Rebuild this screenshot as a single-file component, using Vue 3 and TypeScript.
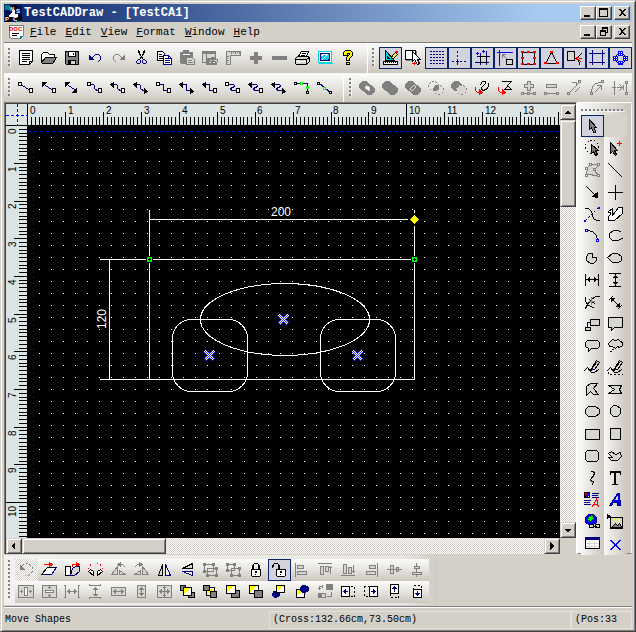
<script setup lang="ts">
import { computed, onMounted, onUnmounted, ref } from 'vue'

interface Layer { stroke: string; fill: string; dash: boolean; d: string }
interface Tool { label: string; layers: Layer[]; state: '' | 'on' | 'dim' }

const palette: Record<string, string> = {
  '-': 'none', K: '#000', N: '#000080', B: '#0000ff', G: '#808080', R: '#ff0000',
  W: '#fff', L: '#d8d6d0', C: '#00d8e0', Y: '#ffff00', E: '#00ff00', F: '#008000',
}

// Each layer is "<stroke><fill>[d for dashed] <path>", layers are joined by "|".
function parse(source: string): Layer[] {
  return source.split('|').map((part) => {
    const cut = part.indexOf(' ')
    return { stroke: palette[part[0]], fill: palette[part[1]], dash: part[2] === 'd', d: part.slice(cut + 1) }
  })
}
function tools(rows: [string, string, ('on' | 'dim')?][]): Tool[] {
  return rows.map(([label, src, state]) => ({ label, layers: parse(src), state: state ?? '' }))
}

let gridDots = ''
for (let y = 1; y < 15; y += 3) for (let x = 2; x < 16; x += 3) gridDots += `M${x} ${y}h1`

const standard = tools([
  ['New', 'KW M1 0H14V11L11 14H1Z|K- M4 3H11M4 5H11M4 7H11M4 9H11M4 11H8M11 14V11H14'],
  ['Open', 'KW M0 12V4L2 2H6L8 4H13V7|KG M0 12L4 7H15L12 12L11 13H1Z'],
  ['Save', 'KG M1 1H14V14H2L1 13Z|KW M4 1H11V6H4Z|K- M9 3V4|KL M4 10H11V14H4Z|KK M5 11H6V13H5Z'],
  ['Undo', 'NN M2 5V9H6Z|N- M5 7L8 4H11L13 6V9L11 11'],
  ['Redo', 'GG M14 5V9H10Z|G- M11 7L8 4H5L3 6V9L5 11', 'dim'],
  ['Cut', 'K- M5 0V2L10 9M11 0V2L6 9M6 1V3M10 1V3|N- M5 9H6L7 10V12L6 13H4L3 12V11ZM10 9H11L13 11V12L12 13H10L9 12V10Z'],
  ['Copy', 'KW M1 1H6L8 3V10H1Z|K- M3 4H5M3 6H6M3 8H6|NW M7 5H12L15 8V14H7Z|N- M9 8H11M9 10H13M9 12H13M12 5V8H15'],
  ['Paste', 'GG M1 2H13V13H2L1 12Z|GG M4 0H9V3H4Z|W- M4 4H10|GL M7 7H13L15 9V14H7Z|G- M9 10H12M9 12H13', 'dim'],
  ['Symbol library', 'GL M0 1H13V12H0Z|GG M0 1H13V3H0Z|G- M4 4V12|GG M5 8H8L9 7H13V14H4Z|L-d M7 10H13M6 12H12|G- M13 9H15L14 14', 'dim'],
  ['Ruler', 'GL M1 1H15V5H5V14H1Z|G- M6 1V3M8 1V2M10 1V3M12 1V2M14 1V3M1 6H3M1 8H2M1 10H3M1 12H2', 'dim'],
  ['Zoom in', 'GG M6 2H9V13H6Z|GG M2 6H13V9H2Z', 'dim'],
  ['Zoom out', 'GG M1 6H15V9H1Z', 'dim'],
  ['Print', 'KW M4 6L7 1H14L12 6Z|K- M8 3H11M7 5H10|KL M1 8L3 6H14L15 8V11L12 14H2L1 13Z|K- M1 9H12L15 7M12 9V13|W- M3 11H10'],
  ['Display', 'CW M1 1H14V12H1Z|NC M3 3H12V10H3Z|W- M4 5L6 4H9M5 9L10 4|B- M10 10L12 8|C- M2 13H15'],
  ['Help', 'KY M3 2L5 0H10L12 2V5L9 8V10H6V7L9 4V3H7V5H3Z|KY M6 12H9V14H6Z'],
])

const snapping = tools([
  ['Design mode', 'KC M3 0V10H12Z|KL M5 6V8H7Z|KW M1 11H15V14H1Z|K- M3 12V12M5 12V12M7 12V12M9 12V12M11 12V12M13 12V12|KY M9 8L10 5L13 2L15 4L11 8Z|R- M13 1H15M14 2H15', 'on'],
  ['Page select', 'KW M0 0H10V9H0Z|G- M11 1V9M1 10H7|KW M7 1V11L9 9L12 14L14 13L12 9H15Z|R- M7 13H11M9 12V14'],
  ['Show grid', 'N- ' + gridDots, 'on'],
  ['Show guides', 'B-d M6 0V15|N-d M0 11H16|N- M5 11H7M6 10V12', 'on'],
  ['Snap to grid', 'N- M6 3V14M12 1V14M3 6H15M1 12H14|K- M6 6H12V12H6Z|B- M2 3H4M3 2V4M8 1H10M9 0V2', 'on'],
  ['Snap to corner', 'B- M0 2H15M2 0V15|KL M9 9H15V14H9Z|G- M5 4L9 8M5 4V7M5 4H8', 'on'],
  ['Bounds', 'K- M2 2H14V14H2Z|RR M1 1H3V2H1ZM7 1H9V2H7ZM13 1H15V2H13ZM1 7H3V8H1ZM13 7H15V8H13ZM1 13H3V14H1ZM7 13H9V14H7ZM13 13H15V14H13Z', 'on'],
  ['Vertices', 'K- M8 2L14 13H2Z|RR M7 1H9V2H7ZM1 12H3V13H1ZM13 12H15V13H13Z', 'on'],
  ['Glue', 'KL M1 1H8V10H1Z|K- M11 7L15 3M11 9L13 12V14M11 8H9|RR M10 7H12L10 9Z|R- M12 9L14 11M13 8H15', 'on'],
  ['Margins', 'N- M3 0V14M13 0V14M0 3H15M0 12H15', 'on'],
  ['Connection points', 'BW M6 1H10V5H6ZM6 11H10V14H6ZM1 6H5V10H1ZM11 6H15V10H11Z|B- M8 1V5M8 11V14M6 3H10M1 8H5M11 8H15M3 6V10M13 6V10M6 13H10|K- M5 4H5M11 4H11M5 12H5M11 12H11M4 5H4M12 5H12M4 11H4M12 11H12', 'on'],
])

const boxA = 'KW M0 2H3V5H0Z|'
const boxB = 'KW M11 8H14V12H11Z'
const arrowA = 'KK M0 4L3 2V7Z|'
const arrowB = 'KK M14 11L11 8V13Z'
const wave = 'N- M4 4H6L7 5V8L8 9L10 10|'
const step = 'N- M4 4H7V10H10|'
const snake = 'N- M4 4H8L9 5L8 7H6L5 9L7 10H10|'
const connectors = tools([
  ['Line connector', 'N- M4 5L10 9|' + boxA + boxB],
  ['Line, start arrow', 'N- M4 5L10 9|KK M1 2H5L1 6Z|' + boxB],
  ['Line, two arrows', 'N- M4 5L10 9|KK M1 2H5L1 6Z|KK M12 12H8L12 8Z'],
  ['Curve connector', wave + boxA + boxB],
  ['Curve, start arrow', wave + arrowA + boxB],
  ['Curve, two arrows', wave + arrowA + arrowB],
  ['Step connector', step + boxA + boxB],
  ['Step, two arrows', step + arrowA + arrowB],
  ['Step, start arrow', step + arrowA + boxB],
  ['Snake connector', snake + boxA + boxB],
  ['Snake, start arrow', snake + arrowA + boxB],
  ['Snake, two arrows', snake + arrowA + arrowB],
  ['Corner link', 'N- M2 3H13V12|KW M0 2H2V4H0ZM12 11H14V13H12Z|EW M6 2H8V4H6ZM12 6H14V8H12Z'],
  ['Diagonal link', 'N- M2 3L13 12|KW M0 2H2V4H0ZM12 11H14V13H12Z|EW M6 7H8V9H6Z'],
])

const lobeA = 'M3 1H7L10 4V7L7 10H3L0 7V4Z'
const lobeB = 'M8 5H12L15 8V11L12 14H8L5 11V8Z'
const booleans = tools([
  ['Combine', `GG ${lobeA}|GG ${lobeB}|LW M7 5L10 7V10L7 9L6 7Z`, 'dim'],
  ['Union', `GG ${lobeA}|GG ${lobeB}`, 'dim'],
  ['Intersect', `GG ${lobeA}|GG ${lobeB}|L- M5 9V8L8 5H9M6 10L7 10L10 7V6|GG M7 7L8 7V8L7 8Z`, 'dim'],
  ['Common', `G-d ${lobeA}|G-d ${lobeB}|GG M7 5L10 5V9L7 10L5 8Z`, 'dim'],
  ['Subtract', `GG ${lobeA}|LL ${lobeB}|G-d ${lobeB}`, 'dim'],
  ['To curve', 'K- M6 4L8 1H11V3L7 7V9L9 10L13 8L14 5V3|R- M1 7V10L3 12H6|RR M5 9V14L8 12Z'],
  ['To polyline', 'K- M5 1H14L10 5L14 9H7L10 6|R- M1 7V10L3 12H6|RR M5 9V14L8 12Z'],
  ['Add node', 'GL M7 1H10V4H13V7H10V10H7V7H4V4H7Z|G- M1 12H3V14H1ZM7 12H9V14H7ZM13 12H15V14H13ZM4 13H6M10 13H12', 'dim'],
  ['Remove node', 'GL M3 4H13V7H3Z|G- M1 12H3V14H1ZM13 12H15V14H13ZM4 13H12', 'dim'],
  ['Straighten', 'G- M3 12L13 2M1 12H3V14H1ZM12 0H14V2H12ZM6 2H9M10 2V5M9 11L13 7', 'dim'],
  ['Bend', 'G- M2 11L3 6L6 3L12 2M1 12H3V14H1ZM12 0H14V2H12ZM6 11L11 6M8 5H12V9', 'dim'],
  ['Break', 'G- M2 1V14M0 7H3M14 3V12M13 1H15V3H13ZM13 12H15V14H13Z|G- M5 7H10M7 4L10 7L7 10M11 5V9', 'dim'],
])

const pencil = 'KL M7 8L12 0L15 2L10 9Z|K- M7 8L6 10L9 9M8 7L13 1|B- M8 9H8'
const drawing: (Tool | null)[] = tools([
  ['Select', 'KG M5 1V11L7 9L9 14H11L10 9H12Z', 'on'],
  ['None', '-- M0 0'],
  ['Lasso', 'K-d M5 0H10L14 4V9L10 13H5L1 9V4Z|KG M7 4V13L9 11L11 15L13 14L11 10H14Z'],
  ['Add to selection', 'KG M3 2V13L5 11L8 15L9 14L7 10H10Z|R- M10 3H14M12 1V5'],
  ['Edit points', 'GL M2 12L3 5L6 2L14 2L10 8L14 13Z|GW M1 5H3V7H1ZM5 1H7V3H5ZM13 1H15V3H13ZM9 6H11V8H9ZM1 12H3V14H1ZM13 12H15V14H13Z', 'dim'],
  ['Line', 'K- M1 1L14 14'],
  ['Arrow', 'K- M2 2L12 12|KK M13 13V8L8 12Z'],
  ['Cross', 'K- M8 1V15M1 8H15'],
  ['Spline', 'K- M1 2H4L7 5L9 12L12 14H15|K-d M1 14L14 1|BB M0 14H1V15H0ZM14 1H15V2H14Z'],
  ['Polyline', 'KW M1 5L5 2V9L11 1H15V7L7 14H1V10L3 8V6H1Z'],
  ['Arc', 'K- M3 2L8 3L12 7L13 12|BW M1 1H3V3H1ZM12 11H14V13H12Z'],
  ['Open ellipse', 'K- M13 3L10 2H6L2 5V9L5 12H10L15 10'],
  ['Pie', 'KL M4 3H8L8 7H12V10L9 13H6L2 10V6Z'],
  ['Closed curve', 'KL M0 7L5 3H10L14 6V10L11 12H5Z'],
  ['Horizontal dimension', 'K- M1 2V13M14 2V13M2 7H13|KK M3 7L5 5V9ZM12 7L10 5V9Z'],
  ['Vertical dimension', 'K- M2 1H13M2 14H13M8 2V13|KK M8 3L6 5H10ZM8 12L6 10H10Z'],
  ['Angle dimension', 'K- M15 2H11L7 5L3 10L1 14M1 3V7L4 11L9 13M5 5L10 9|G- M7 3V10M5 7H10'],
  ['Diagonal dimension', 'K- M2 5L5 2M11 14L14 11M4 4L12 12|KK M4 4H7L4 7ZM12 12H9L12 9Z'],
  ['Boxed callout', 'KL M6 3H15V9H6Z|KL M1 11H6V14H1Z|K- M6 6H3V10'],
  ['Box speech', 'KL M1 1H15V11H7L4 14V11H1Z'],
  ['Round speech', 'KL M3 2H13L15 4V8L13 10H7L4 13V10L1 8V4Z'],
  ['Cloud speech', 'KL M3 3L5 1L8 2L11 1L13 3L15 4V7L12 9L10 8L8 10L5 8H2L1 5Z|K- M5 11H6M3 13H4'],
  ['Freehand', 'K- M0 10L3 7L7 12H10L14 9|' + pencil],
  ['Filled freehand', 'K- M0 10L3 7L7 12H10L14 9|' + pencil + '|K-d M1 11V14H15V11'],
  ['Polygon', 'KL M2 13V4L6 1H13L9 6L14 12H9L6 9Z'],
  ['Filled polygon', 'KL M1 3H14L12 7L14 11H1L7 7Z'],
  ['Ellipse', 'KL M4 2H11L15 5V9L11 12H4L1 9V5Z'],
  ['Circle', 'KL M6 1H9L13 4V9L10 12H6L3 9V4Z'],
  ['Rectangle', 'KL M1 3H15V13H1Z'],
  ['Square', 'KL M3 2H13V13H3Z'],
  ['Rounded rectangle', 'KL M3 2H12L14 4V11L12 13H3L1 11V4Z'],
  ['Blob', 'KL M1 5L4 3L8 6L13 4L14 8L10 12H4L1 9H5L3 7Z'],
  ['Curve', 'K- M7 1H9L10 3L6 9L7 11H9L8 14M10 4L7 8'],
  ['Text', 'K- M3 1H13V4M3 1V4M4 2H12M8 2V14M7 2V14M5 14H10'],
  ['Rich text', 'KB M0 0H5V5H0Z|RR M1 1H2V2H1Z|YY M3 4H4V4H3Z|N- M8 1H14M8 3H13M8 5H14M0 8H6M0 10H5M0 12H6|R- M8 14L12 7L14 14M9 12H13M13 8V13'],
  ['Word art', 'NB M2 13L10 1H12L13 13H10L10 10H6L4 13Z|LL M8 7L10 4V7Z'],
  ['Web link', 'NB M4 0H9L12 3V8L9 10H4L1 8V3Z|FE M5 2L8 1L9 4L6 7L3 5Z|KL M5 10H9V13H5ZM11 10H15V13H11Z|K- M9 12H12'],
  ['Picture', 'KL M3 3H15V14H3Z|Y-d M5 5H13M5 7H13|KG M4 13L8 9L10 11L12 9L14 12V13Z|KK M0 0L3 2L0 4Z'],
  ['Table', 'KW M1 1H15V12H1Z|NN M1 1H15V3H1Z|L- M5 5V11M10 5V11M2 7H14M2 10H14'],
  ['Delete', 'B- M3 4L12 13M4 4L13 13M12 4L3 13M13 4L4 13'],
])
drawing[1] = null

const arrange = tools([
  ['Free rotate', 'G-d M4 3L7 1H10L14 5V9L10 13H6|GG M2 3V7H6Z', 'dim'],
  ['Skew', 'R- M3 2H9|RR M8 0V4L11 2Z|KW M0 12L6 5H15L10 12Z|N- M15 5L10 12H2'],
  ['Shear', 'R- M8 4V2H12|RR M12 0V4L15 2Z|KW M1 4H6V13H1Z|NL M6 13L8 6L11 4H15V9L10 13Z'],
  ['Rotate halves', 'Y- M8 0V14|R-d M1 7L3 2L6 1M15 7L13 2L10 1|KW M1 9L6 13V9L3 7ZM15 9L10 13V9L13 7Z'],
  ['Rotate left', 'GL M7 12V4L1 12ZM9 12H15L9 8Z|G- M8 2H12L14 4|GG M7 2L10 0V4Z', 'dim'],
  ['Rotate right', 'GL M9 12V4L15 12ZM7 12H1L7 8Z|G- M8 2H4L2 4|GG M9 2L6 0V4Z', 'dim'],
  ['Flip horizontal', 'KL M6 2V13H2Z|NW M9 2V13H14Z'],
  ['Flip vertical', 'KL M13 1V6H3Z|NW M13 13V9H3Z'],
  ['Group', 'G- M2 2H11V9H2ZM5 6H14V13H5ZM1 1H3V3H1ZM10 1H12V3H10ZM1 8H3V10H1ZM13 5H15V7H13ZM13 12H15V14H13ZM4 12H6V14H4Z', 'dim'],
  ['Ungroup', 'G- M2 2H9V8H2ZM6 6H14V13H6ZM1 1H3V3H1ZM8 1H10V3H8ZM1 7H3V9H1ZM13 5H15V7H13ZM13 12H15V14H13ZM5 12H7V14H5Z', 'dim'],
  ['Lock', 'K- M4 6V3L6 1H9L11 3V6M5 3V6M10 3V6|KW M3 7H12V13L11 14H4L3 13Z|K- M7 9H8M7 10H8M7 12V12'],
  ['Unlock', 'K- M1 5V3L3 1H6L8 3V6M2 3V4M7 3V6|KW M5 7H14V13L13 14H6L5 13Z|K- M9 9H10M9 10H10M9 12V12', 'on'],
  ['Align left', 'G- M1 1V14|GL M3 3H9V6H3ZM3 9H12V12H3Z', 'dim'],
  ['Align top', 'G- M1 1H14M13 4V11M12 5H14|GL M3 4H6V12H3ZM8 4H11V9H8Z', 'dim'],
  ['Align bottom', 'G- M1 13H14M13 3V10M12 9H14|GL M3 2H6V11H3ZM8 5H11V11H8Z', 'dim'],
  ['Align right', 'G- M14 1V14|GL M6 3H12V6H6ZM3 9H12V12H3Z', 'dim'],
  ['Align middle', 'G- M1 7H15|GL M4 3H7V11H4ZM10 5H12V9H10Z|G- M4 7H7M10 7H12', 'dim'],
  ['Align center', 'G- M7 1V14|GL M5 4H10V6H5ZM3 10H12V12H3Z', 'dim'],
  ['Center horizontally', 'GL M0 1H15V13H0Z|GW M6 3H9V11H6Z|G- M2 7H4M11 7H13M3 6V8M12 6V8', 'dim'],
  ['Center vertically', 'GL M1 1H15V13H1Z|GW M4 6H12V8H4Z|G- M8 2V4M8 10V12M7 3H9M7 11H9', 'dim'],
  ['Space across', 'G- M0 1H1V13H0M15 1H14V13H15M3 7H12M5 5V9M4 6V8M10 5V9M11 6V8', 'dim'],
  ['Space down', 'G- M2 0V1H13V0M2 14V13H13V14M8 3V11M6 5H10M7 4H9M6 10H10M7 11H9', 'dim'],
  ['Same width', 'GL M1 3H15V11H1Z|G- M3 7H13M4 6V8M5 5V9M12 6V8M11 5V9', 'dim'],
  ['Same height', 'GL M4 1H12V13H4Z|G- M8 3V11M7 4H9M6 5H10M7 10H9M6 9H10', 'dim'],
  ['Same size', 'GL M1 1H15V13H1Z|G- M3 7H13M8 2V12M4 6V8M12 6V8M7 3H9M7 11H9M5 5V9M11 5V9', 'dim'],
  ['Bring to front', 'KG M1 1H6V6H1ZM9 8H15V13H9Z|KW M4 3H12V11H4Z|YY M5 4H10L5 9Z'],
  ['Send to back', 'KW M4 3H12V11H4Z|YY M5 5H10L5 9Z|KG M1 1H7V6H1ZM8 7H14V13H8Z'],
  ['Bring forward', 'KG M6 6H14V13H6Z|KW M1 1H10V9H1Z|YY M2 2H7L2 7Z'],
  ['Send backward', 'KW M1 1H10V9H1Z|YY M2 2H7L2 7Z|KG M6 6H14V13H6Z'],
  ['In front of', 'NN M2 7H5L8 9V11L5 13H3L1 11Z|KW M5 1H13V8H5Z|YY M6 2H10L6 6Z'],
  ['Behind', 'KW M2 5H10V13H2Z|YY M3 6H8L3 10Z|NN M8 1H11L14 3V6L11 8H8L6 6V3Z'],
  ['Swap order', 'GG M9 0H15V5H9Z|GL M1 9H8V13H1Z|GG M1 9H4V13H1Z|G- M2 5V2H5M14 8V12H10M1 4H3M5 1V3', 'dim'],
  ['Nudge left', 'K-d M10 2H14V12H10|KW M1 2H9V12H1Z|N- M3 7H7M4 6V8M5 5V9'],
  ['Nudge right', 'K-d M6 2H1V12H6|KW M6 2H14V12H6Z|N- M8 7H12M11 6V8M10 5V9'],
  ['Nudge up', 'K-d M4 9V13H12V9|KW M4 0H12V9H4Z|N- M8 2V7M7 3H9M6 4H10'],
  ['Nudge down', 'K-d M4 5V1H12V5|KW M4 5H12V13H4Z|N- M8 7V11M7 10H9M6 9H10'],
])

const bottomRows = [arrange.slice(0, 18), arrange.slice(18)]
const drawColumns = [drawing.filter((_, i) => i % 2 === 0), drawing.filter((_, i) => i % 2 === 1)]
const menus = ['File', 'Edit', 'View', 'Format', 'Window', 'Help']

const STEP_X = 37.9
const STEP_Y = 37.7
const rulerX = ref<SVGSVGElement | null>(null)
const rulerY = ref<SVGSVGElement | null>(null)
const spanX = ref(0)
const spanY = ref(0)
function measure() {
  spanX.value = rulerX.value?.clientWidth ?? 0
  spanY.value = rulerY.value?.clientHeight ?? 0
}
onMounted(() => {
  measure()
  window.addEventListener('resize', measure)
})
onUnmounted(() => window.removeEventListener('resize', measure))

const range = (span: number, stepSize: number) =>
  Array.from({ length: Math.max(0, Math.floor((span - 16) / stepSize) + 1) }, (_, i) => i)
const numbersX = computed(() => range(spanX.value, STEP_X))
const numbersY = computed(() => range(spanY.value, STEP_Y))

let ticksX = ''
let ticksY = ''
for (let i = 1; i < 600; i++) {
  const near = i % 100 === 0 ? 0 : i % 10 === 0 ? 8 : 13
  const p = Math.floor((i * STEP_X) / 10 - 0.2)
  const q = Math.floor((i * STEP_Y) / 10 - 0.4)
  ticksX += `M${p} ${near}h1V21h-1Z`
  ticksY += `M${near} ${q}V${q + 1}H21V${q}Z`
}

let dots = ''
for (let y = 0; y < 90; y++) {
  for (let x = 0; x < 160; x++) dots += `M${Math.round(11 + x * 12.03)} ${11 + y * 12}h1v1h-1z`
}
const handles = [[121, 133], [386, 133]]
const centers = [[255, 193], [181, 229], [329, 229]]
</script>

<template>
  <div class="window">
    <header class="title">
      <svg class="logo" viewBox="0 0 17 17">
        <rect width="17" height="17" fill="#001060" />
        <path d="M0 0H5V5H0ZM11 10H17V17H11Z" fill="#008088" />
        <path d="M6 0H12V6H6ZM0 11H6V17H0ZM11 10H17V16H11Z" fill="#000" />
        <path d="M7 5H10V9H13V12H4V10L7 8Z" fill="#fff" />
        <text x="5" y="6">N</text><text x="11" y="8">S</text><text x="0" y="16">P</text><text x="8" y="16">C</text>
      </svg>
      <h1>TestCADDraw - [TestCA1]</h1>
      <span class="caps">
        <button class="cap" aria-label="Minimize"><svg viewBox="0 0 12 10"><path d="M2 7H8V9H2Z" /></svg></button>
        <button class="cap" aria-label="Maximize"><svg viewBox="0 0 12 10"><path fill-rule="evenodd" d="M1 0H10V9H1ZM2 2V8H9V2Z" /></svg></button>
        <button class="cap last" aria-label="Close"><svg viewBox="0 0 12 10"><path d="M2 1H4L6 3L8 1H10L7 4V5L10 8H8L6 6L4 8H2L5 5V4Z" /></svg></button>
      </span>
    </header>

    <nav class="menu">
      <svg class="doc" viewBox="0 0 16 15">
        <path d="M1 0H15V11L11 14L8 13L5 14L1 12Z" fill="#fff" stroke="#808080" />
        <path d="M4 8H11M4 10H9" stroke="#000" />
        <path d="M12 14V11H15Z" fill="#008080" />
        <text x="1" y="6">DOC</text>
      </svg>
      <button v-for="m in menus" :key="m" class="menu-item"><u>{{ m[0] }}</u>{{ m.slice(1) }}</button>
      <span class="caps">
        <button class="cap" aria-label="Minimize document"><svg viewBox="0 0 12 10"><path d="M2 7H8V9H2Z" /></svg></button>
        <button class="cap" aria-label="Restore document"><svg viewBox="0 0 12 10"><path fill-rule="evenodd" d="M4 0H10V6H8V9H2V3H4ZM5 2V3H8V5H9V2ZM3 5V8H7V5Z" /></svg></button>
        <button class="cap last" aria-label="Close document"><svg viewBox="0 0 12 10"><path d="M2 1H4L6 3L8 1H10L7 4V5L10 8H8L6 6L4 8H2L5 5V4Z" /></svg></button>
      </span>
    </nav>

    <div v-for="(row, r) in [[standard, snapping], [connectors, booleans]]" :key="r" class="band">
      <div v-for="(bar, b) in row" :key="b" class="bar" role="toolbar">
        <i class="grip"></i>
        <button v-for="t in bar" :key="t.label" class="tool" :class="t.state" :aria-label="t.label">
          <svg viewBox="-0.5 -0.5 17 16"><path v-for="(l, i) in t.layers" :key="i" :d="l.d" :stroke="l.stroke" :fill="l.fill" :class="{ dash: l.dash }" /></svg>
        </button>
      </div>
    </div>

    <main class="work">
      <section class="sheet">
        <svg class="corner" viewBox="0 0 22 22">
          <path d="M0 11.5H21M11.5 0V21" stroke="#fff" />
          <path d="M0 11.5H21M11.5 0V21" stroke="#0000ff" stroke-dasharray="3 2" />
          <path d="M21.5 0V22M0 21.5H22" stroke="#000" />
        </svg>
        <svg ref="rulerX" class="ruler">
          <path :d="ticksX" />
          <text v-for="n in numbersX" :key="n" :x="Math.round(n * STEP_X) + 2" y="10">{{ n }}</text>
          <rect y="21" width="100%" height="1" />
        </svg>
        <svg ref="rulerY" class="ruler">
          <path :d="ticksY" />
          <text v-for="n in numbersY" :key="n" :transform="`translate(10 ${Math.round(n * STEP_Y) + 8 + (n > 9 ? 6 : 0)}) rotate(-90)`">{{ n }}</text>
          <rect x="21" width="1" height="100%" />
        </svg>
        <svg class="canvas">
          <defs>
            <pattern id="checker" width="2" height="2" patternUnits="userSpaceOnUse">
              <rect width="2" height="2" fill="#fff" />
              <path d="M0 0H1V2H2V1H0Z" fill="#3030ff" />
            </pattern>
          </defs>
          <path :d="dots" fill="#fff" />
          <g class="guide"><line x1="0" y1="5.5" x2="100%" y2="5.5" /><line x1="5.5" y1="0" x2="5.5" y2="100%" /></g>
          <g class="shape">
            <path d="M121.5 84V253M386.5 84V253M72 133.5H387M72 253.5H387M81.5 134V253M122 93.5H384" />
            <ellipse cx="257" cy="193.5" rx="84.5" ry="36" />
            <rect x="144.5" y="193.5" width="75" height="72" rx="19" />
            <rect x="292.5" y="193.5" width="75" height="72" rx="19" />
          </g>
          <text x="243" y="90">200</text>
          <text transform="translate(78 203) rotate(-90)">120</text>
          <g v-for="(h, i) in handles" :key="'h' + i" :transform="`translate(${h[0]} ${h[1]})`">
            <rect x="-3" y="-3" width="7" height="7" fill="#000" />
            <rect x="-2" y="-2" width="5" height="5" fill="#00ff00" />
            <path d="M0 -1h1v1h1v1h-1v1h-1v-1h-1v-1h1z" fill="#000" />
          </g>
          <path d="M386.5 88L392 93.5L386.5 99L381 93.5Z" fill="#ffff00" stroke="#000" />
          <g v-for="(c, i) in centers" :key="'c' + i" :transform="`translate(${c[0]} ${c[1]})`">
            <path class="center" :class="{ wide: i === 0 }" d="M-4 -4L5 5M5 -4L-4 5" />
          </g>
        </svg>
        <div class="scroll vertical">
          <button class="stub" aria-label="Scroll up"><svg viewBox="0 0 12 12"><path d="M6 4L9 8H2Z" /></svg></button>
          <div class="thumb"></div>
          <button class="stub end" aria-label="Scroll down"><svg viewBox="0 0 12 12"><path d="M2 5H9L6 8H5Z" /></svg></button>
        </div>
        <div class="scroll horizontal">
          <button class="stub" aria-label="Scroll left"><svg viewBox="0 0 12 12"><path d="M3 6L7 2V10Z" /></svg></button>
          <div class="thumb"></div>
          <button class="stub end" aria-label="Scroll right"><svg viewBox="0 0 12 12"><path d="M4 2V10L8 6Z" /></svg></button>
        </div>
      </section>

      <aside class="palette">
        <i class="grip-top"></i>
        <div class="columns">
          <div v-for="(col, c) in drawColumns" :key="c" class="column">
            <template v-for="(t, i) in col" :key="i">
              <button v-if="t" class="tool" :class="t.state" :aria-label="t.label">
                <svg viewBox="-0.5 -0.5 17 16"><path v-for="(l, j) in t.layers" :key="j" :d="l.d" :stroke="l.stroke" :fill="l.fill" :class="{ dash: l.dash }" /></svg>
              </button>
              <span v-else class="blank"></span>
            </template>
          </div>
        </div>
      </aside>
    </main>

    <div class="dock">
      <i class="grip tall"></i>
      <div class="rows">
        <div v-for="(row, r) in bottomRows" :key="r" class="tool-row" role="toolbar">
          <button v-for="t in row" :key="t.label" class="tool" :class="[t.state, { hatch: t.label === 'Free rotate' }]" :aria-label="t.label">
            <svg viewBox="-0.5 -0.5 17 16"><path v-for="(l, i) in t.layers" :key="i" :d="l.d" :stroke="l.stroke" :fill="l.fill" :class="{ dash: l.dash }" /></svg>
          </button>
        </div>
      </div>
    </div>

    <footer class="status">
      <span class="hint">Move Shapes</span>
      <span class="cell cross">(Cross:132.66cm,73.50cm)</span>
      <span class="cell pos">(Pos:33</span>
    </footer>
  </div>
</template>

<style>
body { margin: 0; background: #d4d0c8; }
</style>

<style scoped>
* { box-sizing: border-box; }
button { appearance: none; margin: 0; padding: 0; border: 0; background: none; color: inherit; font: inherit; }
svg { display: block; shape-rendering: crispEdges; }
.window {
  display: flex; flex-direction: column; height: 100vh; padding: 2px;
  overflow: hidden; background: #d4d0c8; color: #000;
  border: 1px solid; border-color: #d4d0c8 #404040 #404040 #d4d0c8;
  box-shadow: inset 1px 1px #fff, inset -1px -1px #808080;
  font: 11px/14px "Liberation Mono", monospace;
}
.title {
  display: flex; flex: none; align-items: center; height: 18px; margin: 1px 1px 0; padding: 0 2px 0 1px;
  background: linear-gradient(90deg, #0a246a, #a6caf0 85%); color: #fff;
}
.title h1 { margin: 0 0 0 2px; font-size: 12px; line-height: 14px; font-weight: bold; white-space: pre; }
.logo { width: 17px; height: 17px; }
.logo text { font: bold 6px "Liberation Sans", sans-serif; fill: #fff; }
.caps { display: flex; margin-left: auto; }
.cap {
  display: flex; width: 16px; height: 14px; padding: 1px; background: #d4d0c8; color: #000;
  border: 1px solid; border-color: #fff #404040 #404040 #fff; box-shadow: inset -1px -1px #808080;
}
.cap.last { margin-left: 2px; }
.cap svg { width: 12px; height: 10px; }
.menu { display: flex; flex: none; align-items: center; height: 20px; padding: 0 3px 0 5px; }
.doc { width: 16px; height: 15px; margin-right: 6px; fill: none; }
.doc text { font: bold 6px "Liberation Sans", sans-serif; fill: #ff0000; }
.menu-item { margin-right: 9px; }
.band {
  display: flex; flex: none; height: 29px; margin: 0 1px;
  border-top: 1px solid #f8f8f8; background: linear-gradient(#fbfbfa, #e8e6e2 45%, #cbc7be);
}
.band:nth-of-type(1) { height: 31px; border-top-color: #808080; }
.bar { display: flex; padding: 4px 7px 0 4px; }
.bar + .bar { padding-right: 0; border-left: 1px solid #fff; }
.band:nth-of-type(2) .bar { padding-top: 3px; padding-right: 6px; }
.band:nth-of-type(2) .bar + .bar { padding-right: 0; padding-left: 5px; }
.grip {
  flex: none; width: 3px; height: 19px; margin: 1px 4px 0 0;
  background: repeating-linear-gradient(#808080 0 2px, transparent 2px 4px);
  border-right: 1px solid #f4f4f4;
}
.grip.tall { height: 39px; margin-top: 1px; }
.tool { display: flex; flex: none; width: 23px; height: 22px; padding: 3px; }
.tool svg { flex: none; width: 17px; height: 16px; stroke-linecap: square; }
.tool .dash { stroke-linecap: butt; stroke-dasharray: 2 2; }
.tool.on { padding: 2px; border: 1px solid #0a246a; background: #d2d3df; }
.tool.hatch, .scroll { background: repeating-conic-gradient(#fff 0 25%, #d4d0c8 0 50%) 0 0 / 2px 2px; }
.work { display: flex; flex: 1; min-height: 0; margin: 0 1px; }
.sheet {
  display: grid; flex: 1; min-width: 0;
  grid-template-columns: 22px minmax(0, 1fr) 16px; grid-template-rows: 22px minmax(0, 1fr) 16px;
  border: solid; border-width: 1px 1px 0 1px; border-color: #808080 #fff #fff #808080;
  box-shadow: inset 1px 1px #404040; padding: 1px 0 0 1px;
}
.corner, .ruler { width: 100%; height: 100%; background: #dce4e4; }
.ruler { overflow: hidden; }
.ruler text { font: 10px "Liberation Sans", sans-serif; }
.canvas { grid-area: 2 / 2; width: 100%; height: 100%; overflow: hidden; background: #000; }
.canvas text { font: 12px "Liberation Sans", sans-serif; fill: #fff; }
.guide { stroke: #0000e0; stroke-dasharray: 3 3; }
.shape { fill: none; stroke: #fff; }
.center { stroke: url(#checker); stroke-width: 3px; }
.center.wide { stroke-width: 4px; }
.scroll { display: flex; }
.vertical { grid-area: 1 / 3 / 3 / 4; flex-direction: column; }
.horizontal { grid-area: 3 / 1 / 4 / 3; }
.stub, .thumb {
  flex: none; width: 16px; height: 16px; padding: 1px; background: #d4d0c8;
  border: 1px solid; border-color: #d4d0c8 #404040 #404040 #d4d0c8;
  box-shadow: inset 1px 1px #fff, inset -1px -1px #808080;
}
.stub.end { margin: auto 0 0 auto; }
.stub svg { width: 12px; height: 12px; }
.vertical .thumb { height: 20%; }
.horizontal .thumb { width: 26%; }
.palette { flex: none; width: 55px; padding: 6px 4px 0 3px; border: 1px solid; border-color: #fff transparent #808080 #fff; background: linear-gradient(90deg, #faf9f8, #cbc7be); }
.grip-top { display: block; height: 3px; width: 44px; margin-bottom: 3px; border-bottom: 1px solid #f4f4f4; background: repeating-linear-gradient(90deg, #808080 0 2px, transparent 2px 4px); }
.columns { display: flex; }
.column { background: linear-gradient(90deg, #f8f7f6, #cbc7be); }
.blank { display: block; width: 23px; height: 22px; background: #d6d3cc; }
.dock { display: flex; flex: none; align-self: flex-start; height: 50px; margin: 1px; padding: 4px 8px 0 4px; background: linear-gradient(90deg, #f2f1ef, #e8e6e2 92%, #d0ccc4); }
.tool-row { display: flex; height: 22px; background: linear-gradient(#fbfbfa, #e8e6e2 45%, #cbc7be); }
.status { display: flex; flex: none; height: 23px; margin: 0 1px; padding-top: 4px; border-top: 1px solid #808080; box-shadow: inset 0 1px #fff; line-height: 16px; font-size: 10px; white-space: nowrap; }
.hint { flex: 1; padding: 1px 0 0 1px; }
.cell { border: 1px solid #e4e1da; height: 18px; padding-left: 3px; }
.cross { width: 302px; }
.pos { width: 61px; overflow: hidden; }
</style>
